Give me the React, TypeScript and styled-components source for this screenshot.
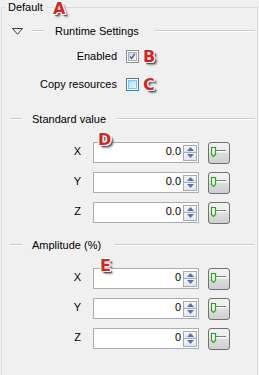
import React from "react";
import styled, { createGlobalStyle } from "styled-components";

const Global = createGlobalStyle`
  html, body { margin: 0; padding: 0; background: #f0f0f0; }
  body {
    font-family: "Liberation Sans", Arial, sans-serif;
    font-size: 11px;
    color: #000;
  }
`;

const Page = styled.div`
  position: relative;
  width: 259px;
  height: 375px;
  overflow: hidden;
  background: #f0f0f0;
`;

const Group = styled.fieldset`
  box-sizing: border-box;
  margin: 0 0 0 1px;
  width: 257px;
  height: 420px;
  padding: 0;
  min-width: 0;
  border: 1px solid #d5dfe5;
`;

const Legend = styled.legend`
  margin-left: 3px;
  padding: 0 3px;
  line-height: 14px;
  font-size: 11px;
`;

const Content = styled.div`
  display: flex;
  flex-direction: column;
`;

const SectionHeader = styled.div<{ $top: number }>`
  display: flex;
  align-items: center;
  height: 14px;
  margin-top: ${(p) => p.$top}px;
  padding: 0 2px 0 8px;
`;

const Rule = styled.div<{ $w?: number }>`
  height: 0;
  border-top: 1px solid #c9c9c9;
  border-bottom: 1px solid #ffffff;
  flex: ${(p) => (p.$w ? `0 0 ${p.$w}px` : "1 1 auto")};
`;

const Title = styled.span<{ $before: number; $after: number }>`
  margin: 0 ${(p) => p.$after}px 0 ${(p) => p.$before}px;
  white-space: nowrap;
  line-height: 14px;
`;

const Toggle = styled.svg`
  flex: 0 0 auto;
  margin: 0 9px 0 2px;
`;

const CheckRow = styled.label<{ $top: number }>`
  display: flex;
  align-items: center;
  height: 13px;
  margin-top: ${(p) => p.$top}px;
`;

const CheckLabel = styled.span`
  width: 115px;
  text-align: right;
  margin-right: 9px;
  line-height: 13px;
`;

const Box = styled.span<{ $hover?: boolean }>`
  box-sizing: border-box;
  width: 13px;
  height: 13px;
  display: flex;
  align-items: center;
  justify-content: center;
  border: 1px solid ${(p) => (p.$hover ? "#3c7fb1" : "#8e8f8f")};
  background: #fff;
  padding: 1px;
`;

const BoxInner = styled.span<{ $hover?: boolean }>`
  width: 100%;
  height: 100%;
  display: flex;
  align-items: center;
  justify-content: center;
  box-sizing: border-box;
  border: 1px solid ${(p) => (p.$hover ? "#79c6f9" : "#aeb3b9")};
  background: ${(p) =>
    p.$hover
      ? "linear-gradient(135deg, #b1dffd 0%, #e9f7fe 100%)"
      : "linear-gradient(135deg, #cbcfd5 0%, #f6f6f6 100%)"};
`;

const ValueRow = styled.div<{ $top: number }>`
  display: flex;
  align-items: center;
  height: 21px;
  margin-top: ${(p) => p.$top}px;
`;

const AxisLabel = styled.span`
  width: 79px;
  margin-right: 12px;
  text-align: right;
  line-height: 19px;
  padding-bottom: 2px;
`;

const Field = styled.div`
  box-sizing: border-box;
  width: 106px;
  height: 21px;
  border: 1px solid #abadb3;
  background: #fff;
  display: flex;
  align-items: center;
  justify-content: flex-end;
  padding-right: 1px;
`;

const FieldValue = styled.span`
  margin-right: 2px;
  line-height: 17px;
  padding-bottom: 2px;
`;

const Spinner = styled.div`
  box-sizing: border-box;
  width: 14px;
  height: 16px;
  display: flex;
  flex-direction: column;
  border: 1px solid #a7abb0;
`;

const SpinButton = styled.div`
  flex: 1 1 0;
  display: flex;
  align-items: center;
  justify-content: center;
  background: linear-gradient(#f7f9fb, #e1e7ee);
  & + & {
    border-top: 1px solid #a7abb0;
  }
`;

const SliderButton = styled.button`
  box-sizing: border-box;
  width: 22px;
  height: 22px;
  margin-left: 9px;
  padding: 0;
  border: 1px solid #707070;
  border-radius: 3px;
  background: linear-gradient(#f2f2f2 0%, #ebebeb 50%, #dddddd 51%, #cfcfcf 100%);
  display: flex;
  align-items: center;
  justify-content: center;
`;

const Badge = styled.span<{ $x: number; $y: number }>`
  position: absolute;
  left: ${(p) => p.$x}px;
  top: ${(p) => p.$y}px;
  font-family: "DejaVu Sans", "Liberation Sans", sans-serif;
  font-weight: 700;
  font-size: 16px;
  line-height: 15px;
  color: #d8231f;
  text-shadow: -1px 0 0 #fff, 1px 0 0 #fff, 0 -1px 0 #fff, 0 1px 0 #fff,
    -1px -1px 0 #fff, 1px -1px 0 #fff, -1px 1px 0 #fff, 1px 1px 0 #fff,
    2px 2px 1px #3d5466, 3px 3px 2px rgba(61, 84, 102, 0.6);
`;

const UpArrow = () => (
  <svg width="7" height="4" viewBox="0 0 7 4">
    <path d="M3.5 0 L7 4 L0 4 Z" fill="#5373b6" />
  </svg>
);

const DownArrow = () => (
  <svg width="7" height="4" viewBox="0 0 7 4">
    <path d="M0 0 L7 0 L3.5 4 Z" fill="#5373b6" />
  </svg>
);

const SliderIcon = () => (
  <svg width="20" height="20" viewBox="0 0 20 20">
    <path d="M7 7.5 H17" stroke="#7d7d7d" strokeWidth="1" />
    <path d="M7 8.5 H17" stroke="#ffffff" strokeWidth="1" />
    <path
      d="M2.5 4.5 H6.5 V11.5 L4.5 13.5 L2.5 11.5 Z"
      fill="#f4fbf0"
      stroke="#27a322"
      strokeWidth="1.2"
    />
  </svg>
);

const Check = () => (
  <svg width="9" height="9" viewBox="0 0 9 9">
    <path d="M1.5 4.5 L3.5 7 L7.5 1" stroke="#3f55a0" strokeWidth="1.6" fill="none" />
  </svg>
);

type ValueProps = { axis: string; value: string; top: number };

const ValueLine = ({ axis, value, top }: ValueProps) => (
  <ValueRow $top={top}>
    <AxisLabel>{axis}</AxisLabel>
    <Field>
      <FieldValue>{value}</FieldValue>
      <Spinner>
        <SpinButton>
          <UpArrow />
        </SpinButton>
        <SpinButton>
          <DownArrow />
        </SpinButton>
      </Spinner>
    </Field>
    <SliderButton>
      <SliderIcon />
    </SliderButton>
  </ValueRow>
);

export default function App() {
  return (
    <Page>
      <Global />
      <Group>
        <Legend>Default</Legend>
        <Content>
          <SectionHeader $top={10}>
            <Toggle width="11" height="7" viewBox="0 0 11 7">
              <path d="M0.5 0.5 H10.5 L5.5 6.2 Z" fill="none" stroke="#3a3a3a" strokeWidth="1" />
            </Toggle>
            <Rule $w={12} />
            <Title $before={11} $after={16}>Runtime Settings</Title>
            <Rule />
          </SectionHeader>
          <CheckRow $top={12}>
            <CheckLabel>Enabled</CheckLabel>
            <Box>
              <BoxInner>
                <Check />
              </BoxInner>
            </Box>
          </CheckRow>
          <CheckRow $top={15}>
            <CheckLabel>Copy resources</CheckLabel>
            <Box $hover>
              <BoxInner $hover />
            </Box>
          </CheckRow>
          <SectionHeader $top={21}>
            <Rule $w={12} />
            <Title $before={10} $after={11}>Standard value</Title>
            <Rule />
          </SectionHeader>
          <ValueLine axis="X" value="0.0" top={16} />
          <ValueLine axis="Y" value="0.0" top={9} />
          <ValueLine axis="Z" value="0.0" top={9} />
          <SectionHeader $top={15}>
            <Rule $w={12} />
            <Title $before={10} $after={14}>Amplitude (%)</Title>
            <Rule />
          </SectionHeader>
          <ValueLine axis="X" value="0" top={16} />
          <ValueLine axis="Y" value="0" top={9} />
          <ValueLine axis="Z" value="0" top={9} />
        </Content>
      </Group>
      <Badge $x={53} $y={1}>A</Badge>
      <Badge $x={143} $y={49}>B</Badge>
      <Badge $x={143} $y={77}>C</Badge>
      <Badge $x={98} $y={132}>D</Badge>
      <Badge $x={100} $y={258}>E</Badge>
    </Page>
  );
}
